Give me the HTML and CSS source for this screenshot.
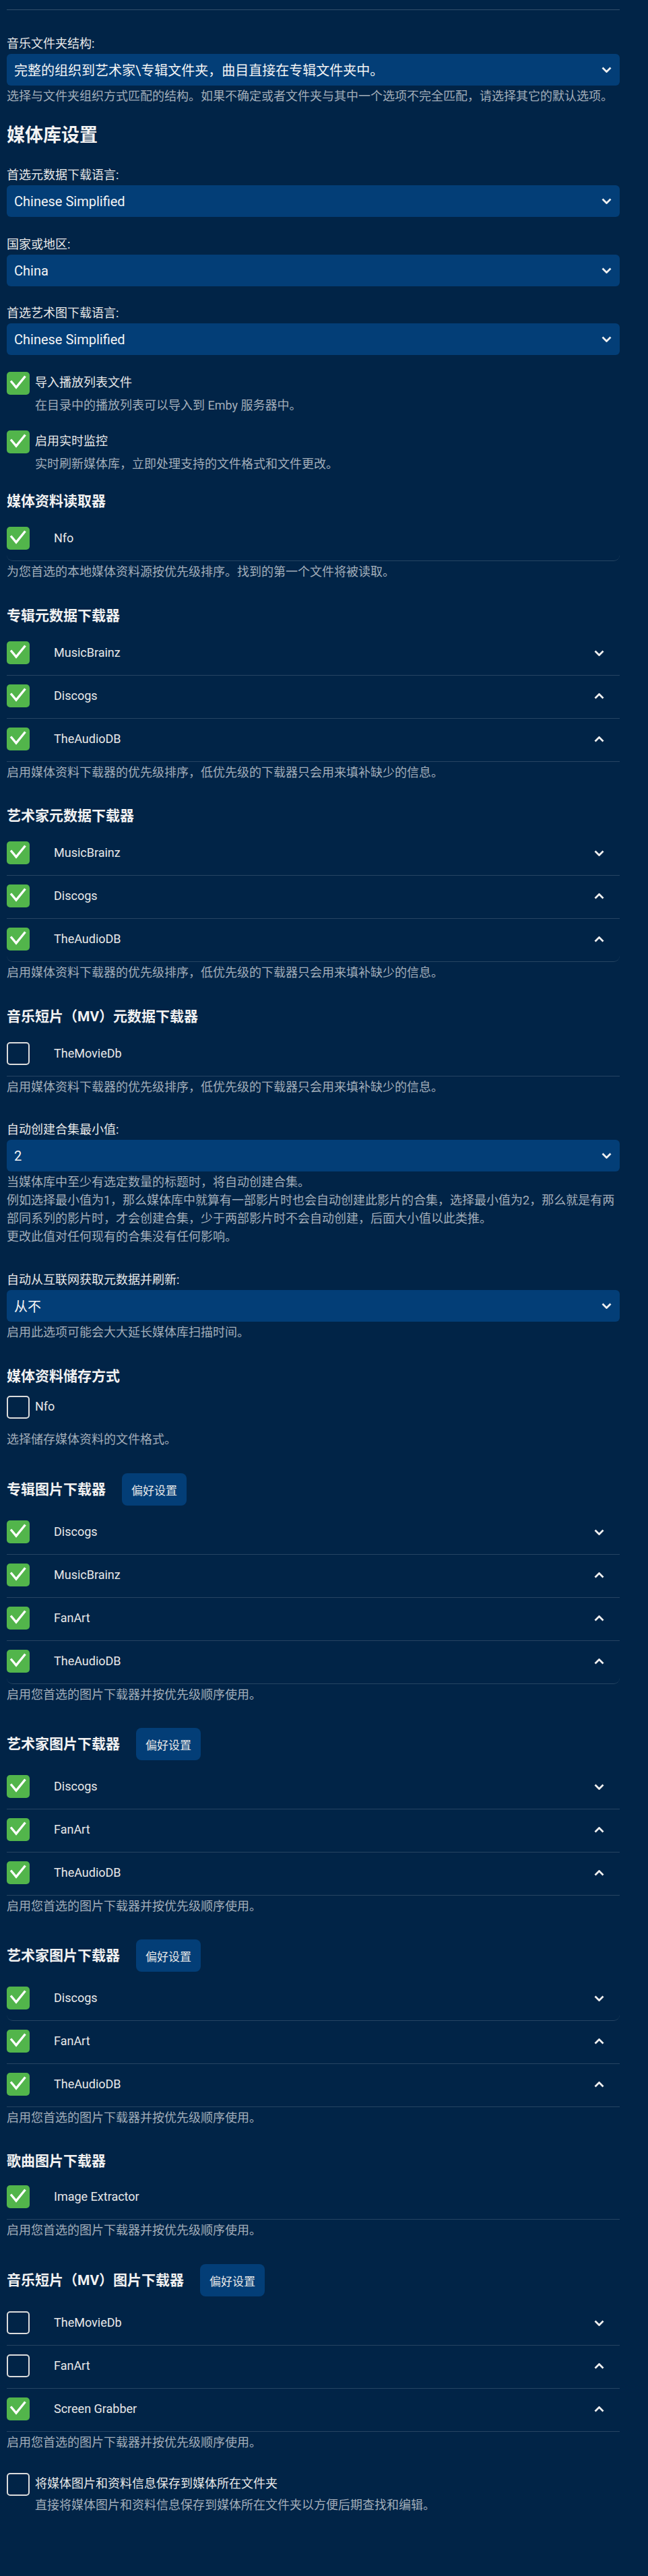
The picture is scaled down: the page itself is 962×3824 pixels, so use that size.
FILE: index.html
```html
<!DOCTYPE html>
<html lang="zh-CN">
<head>
<meta charset="utf-8">
<title>媒体库设置</title>
<link rel="stylesheet" href="styles.css">
</head>
<body>
<div class="page">
  <div class="rule"></div>

  <div class="field m38">
    <div class="field-label">音乐文件夹结构:</div>
    <div class="select"><span>完整的组织到艺术家\专辑文件夹，曲目直接在专辑文件夹中。</span><svg class="chev" viewBox="0 0 15 9"><path d="M1.5 1.5L7.5 7.5 13.5 1.5"/></svg></div>
  </div>
  <div class="help">选择与文件夹组织方式匹配的结构。如果不确定或者文件夹与其中一个选项不完全匹配，请选择其它的默认选项。</div>

  <h2 class="title m28">媒体库设置</h2>

  <div class="field m30">
    <div class="field-label">首选元数据下载语言:</div>
    <div class="select"><span>Chinese Simplified</span><svg class="chev" viewBox="0 0 15 9"><path d="M1.5 1.5L7.5 7.5 13.5 1.5"/></svg></div>
  </div>
  <div class="field m29">
    <div class="field-label">国家或地区:</div>
    <div class="select"><span>China</span><svg class="chev" viewBox="0 0 15 9"><path d="M1.5 1.5L7.5 7.5 13.5 1.5"/></svg></div>
  </div>
  <div class="field m28">
    <div class="field-label">首选艺术图下载语言:</div>
    <div class="select"><span>Chinese Simplified</span><svg class="chev" viewBox="0 0 15 9"><path d="M1.5 1.5L7.5 7.5 13.5 1.5"/></svg></div>
  </div>

  <div class="check-item m25">
    <div class="check-line"><span class="cb on"><svg class="tick" viewBox="0 0 34 34"><path d="M6 13.5L14 23 27.5 6.5"/></svg></span><span class="check-text">导入播放列表文件</span></div>
    <div class="check-sub">在目录中的播放列表可以导入到 Emby 服务器中。</div>
  </div>
  <div class="check-item m24">
    <div class="check-line"><span class="cb on"><svg class="tick" viewBox="0 0 34 34"><path d="M6 13.5L14 23 27.5 6.5"/></svg></span><span class="check-text">启用实时监控</span></div>
    <div class="check-sub">实时刷新媒体库，立即处理支持的文件格式和文件更改。</div>
  </div>

  <h3 class="subtitle m28">媒体资料读取器</h3>
  <div class="list m11">
    <div class="row rounded"><span class="cb on"><svg class="tick" viewBox="0 0 34 34"><path d="M6 13.5L14 23 27.5 6.5"/></svg></span><span class="name">Nfo</span></div>
  </div>
  <div class="help">为您首选的本地媒体资料源按优先级排序。找到的第一个文件将被读取。</div>

  <h3 class="subtitle m38">专辑元数据下载器</h3>
  <div class="list m11">
    <div class="row"><span class="cb on"><svg class="tick" viewBox="0 0 34 34"><path d="M6 13.5L14 23 27.5 6.5"/></svg></span><span class="name">MusicBrainz</span><svg class="chev row-chev" viewBox="0 0 15 9"><path d="M1.5 1.5L7.5 7.5 13.5 1.5"/></svg></div>
    <div class="row"><span class="cb on"><svg class="tick" viewBox="0 0 34 34"><path d="M6 13.5L14 23 27.5 6.5"/></svg></span><span class="name">Discogs</span><svg class="chev row-chev" viewBox="0 0 15 9"><path d="M1.5 7.5L7.5 1.5 13.5 7.5"/></svg></div>
    <div class="row"><span class="cb on"><svg class="tick" viewBox="0 0 34 34"><path d="M6 13.5L14 23 27.5 6.5"/></svg></span><span class="name">TheAudioDB</span><svg class="chev row-chev" viewBox="0 0 15 9"><path d="M1.5 7.5L7.5 1.5 13.5 7.5"/></svg></div>
  </div>
  <div class="help">启用媒体资料下载器的优先级排序，低优先级的下载器只会用来填补缺少的信息。</div>

  <h3 class="subtitle m37">艺术家元数据下载器</h3>
  <div class="list m11">
    <div class="row"><span class="cb on"><svg class="tick" viewBox="0 0 34 34"><path d="M6 13.5L14 23 27.5 6.5"/></svg></span><span class="name">MusicBrainz</span><svg class="chev row-chev" viewBox="0 0 15 9"><path d="M1.5 1.5L7.5 7.5 13.5 1.5"/></svg></div>
    <div class="row"><span class="cb on"><svg class="tick" viewBox="0 0 34 34"><path d="M6 13.5L14 23 27.5 6.5"/></svg></span><span class="name">Discogs</span><svg class="chev row-chev" viewBox="0 0 15 9"><path d="M1.5 7.5L7.5 1.5 13.5 7.5"/></svg></div>
    <div class="row rounded"><span class="cb on"><svg class="tick" viewBox="0 0 34 34"><path d="M6 13.5L14 23 27.5 6.5"/></svg></span><span class="name">TheAudioDB</span><svg class="chev row-chev" viewBox="0 0 15 9"><path d="M1.5 7.5L7.5 1.5 13.5 7.5"/></svg></div>
  </div>
  <div class="help">启用媒体资料下载器的优先级排序，低优先级的下载器只会用来填补缺少的信息。</div>

  <h3 class="subtitle m38">音乐短片（MV）元数据下载器</h3>
  <div class="list m11">
    <div class="row"><span class="cb off"></span><span class="name">TheMovieDb</span></div>
  </div>
  <div class="help">启用媒体资料下载器的优先级排序，低优先级的下载器只会用来填补缺少的信息。</div>

  <div class="field m38">
    <div class="field-label">自动创建合集最小值:</div>
    <div class="select"><span>2</span><svg class="chev" viewBox="0 0 15 9"><path d="M1.5 1.5L7.5 7.5 13.5 1.5"/></svg></div>
  </div>
  <div class="help">当媒体库中至少有选定数量的标题时，将自动创建合集。<br>例如选择最小值为1，那么媒体库中就算有一部影片时也会自动创建此影片的合集，选择最小值为2，那么就是有两部同系列的影片时，才会创建合集，少于两部影片时不会自动创建，后面大小值以此类推。<br>更改此值对任何现有的合集没有任何影响。</div>

  <div class="field m39">
    <div class="field-label">自动从互联网获取元数据并刷新:</div>
    <div class="select"><span>从不</span><svg class="chev" viewBox="0 0 15 9"><path d="M1.5 1.5L7.5 7.5 13.5 1.5"/></svg></div>
  </div>
  <div class="help">启用此选项可能会大大延长媒体库扫描时间。</div>

  <h3 class="subtitle m38">媒体资料储存方式</h3>
  <div class="check-item m15">
    <div class="check-line"><span class="cb off"></span><span class="check-text">Nfo</span></div>
  </div>
  <div class="help m17">选择储存媒体资料的文件格式。</div>

  <div class="head-row m37">
    <h3 class="subtitle">专辑图片下载器</h3>
    <span class="btn">偏好设置</span>
  </div>
  <div class="list m9">
    <div class="row"><span class="cb on"><svg class="tick" viewBox="0 0 34 34"><path d="M6 13.5L14 23 27.5 6.5"/></svg></span><span class="name">Discogs</span><svg class="chev row-chev" viewBox="0 0 15 9"><path d="M1.5 1.5L7.5 7.5 13.5 1.5"/></svg></div>
    <div class="row"><span class="cb on"><svg class="tick" viewBox="0 0 34 34"><path d="M6 13.5L14 23 27.5 6.5"/></svg></span><span class="name">MusicBrainz</span><svg class="chev row-chev" viewBox="0 0 15 9"><path d="M1.5 7.5L7.5 1.5 13.5 7.5"/></svg></div>
    <div class="row"><span class="cb on"><svg class="tick" viewBox="0 0 34 34"><path d="M6 13.5L14 23 27.5 6.5"/></svg></span><span class="name">FanArt</span><svg class="chev row-chev" viewBox="0 0 15 9"><path d="M1.5 7.5L7.5 1.5 13.5 7.5"/></svg></div>
    <div class="row rounded"><span class="cb on"><svg class="tick" viewBox="0 0 34 34"><path d="M6 13.5L14 23 27.5 6.5"/></svg></span><span class="name">TheAudioDB</span><svg class="chev row-chev" viewBox="0 0 15 9"><path d="M1.5 7.5L7.5 1.5 13.5 7.5"/></svg></div>
  </div>
  <div class="help">启用您首选的图片下载器并按优先级顺序使用。</div>

  <div class="head-row m36">
    <h3 class="subtitle">艺术家图片下载器</h3>
    <span class="btn">偏好设置</span>
  </div>
  <div class="list m9">
    <div class="row"><span class="cb on"><svg class="tick" viewBox="0 0 34 34"><path d="M6 13.5L14 23 27.5 6.5"/></svg></span><span class="name">Discogs</span><svg class="chev row-chev" viewBox="0 0 15 9"><path d="M1.5 1.5L7.5 7.5 13.5 1.5"/></svg></div>
    <div class="row"><span class="cb on"><svg class="tick" viewBox="0 0 34 34"><path d="M6 13.5L14 23 27.5 6.5"/></svg></span><span class="name">FanArt</span><svg class="chev row-chev" viewBox="0 0 15 9"><path d="M1.5 7.5L7.5 1.5 13.5 7.5"/></svg></div>
    <div class="row"><span class="cb on"><svg class="tick" viewBox="0 0 34 34"><path d="M6 13.5L14 23 27.5 6.5"/></svg></span><span class="name">TheAudioDB</span><svg class="chev row-chev" viewBox="0 0 15 9"><path d="M1.5 7.5L7.5 1.5 13.5 7.5"/></svg></div>
  </div>
  <div class="help">启用您首选的图片下载器并按优先级顺序使用。</div>

  <div class="head-row m36">
    <h3 class="subtitle">艺术家图片下载器</h3>
    <span class="btn">偏好设置</span>
  </div>
  <div class="list m9">
    <div class="row rounded"><span class="cb on"><svg class="tick" viewBox="0 0 34 34"><path d="M6 13.5L14 23 27.5 6.5"/></svg></span><span class="name">Discogs</span><svg class="chev row-chev" viewBox="0 0 15 9"><path d="M1.5 1.5L7.5 7.5 13.5 1.5"/></svg></div>
    <div class="row"><span class="cb on"><svg class="tick" viewBox="0 0 34 34"><path d="M6 13.5L14 23 27.5 6.5"/></svg></span><span class="name">FanArt</span><svg class="chev row-chev" viewBox="0 0 15 9"><path d="M1.5 7.5L7.5 1.5 13.5 7.5"/></svg></div>
    <div class="row"><span class="cb on"><svg class="tick" viewBox="0 0 34 34"><path d="M6 13.5L14 23 27.5 6.5"/></svg></span><span class="name">TheAudioDB</span><svg class="chev row-chev" viewBox="0 0 15 9"><path d="M1.5 7.5L7.5 1.5 13.5 7.5"/></svg></div>
  </div>
  <div class="help">启用您首选的图片下载器并按优先级顺序使用。</div>

  <h3 class="subtitle m37">歌曲图片下载器</h3>
  <div class="list m9">
    <div class="row"><span class="cb on"><svg class="tick" viewBox="0 0 34 34"><path d="M6 13.5L14 23 27.5 6.5"/></svg></span><span class="name">Image Extractor</span></div>
  </div>
  <div class="help">启用您首选的图片下载器并按优先级顺序使用。</div>

  <div class="head-row m37">
    <h3 class="subtitle">音乐短片（MV）图片下载器</h3>
    <span class="btn">偏好设置</span>
  </div>
  <div class="list m9">
    <div class="row"><span class="cb off"></span><span class="name">TheMovieDb</span><svg class="chev row-chev" viewBox="0 0 15 9"><path d="M1.5 1.5L7.5 7.5 13.5 1.5"/></svg></div>
    <div class="row"><span class="cb off"></span><span class="name">FanArt</span><svg class="chev row-chev" viewBox="0 0 15 9"><path d="M1.5 7.5L7.5 1.5 13.5 7.5"/></svg></div>
    <div class="row"><span class="cb on"><svg class="tick" viewBox="0 0 34 34"><path d="M6 13.5L14 23 27.5 6.5"/></svg></span><span class="name">Screen Grabber</span><svg class="chev row-chev" viewBox="0 0 15 9"><path d="M1.5 7.5L7.5 1.5 13.5 7.5"/></svg></div>
  </div>
  <div class="help">启用您首选的图片下载器并按优先级顺序使用。</div>

  <div class="check-item m32">
    <div class="check-line"><span class="cb off"></span><span class="check-text">将媒体图片和资料信息保存到媒体所在文件夹</span></div>
    <div class="check-sub tight">直接将媒体图片和资料信息保存到媒体所在文件夹以方便后期查找和编辑。</div>
  </div>
</div>
</body>
</html>
```

FILE: styles.css
```css
html, body {
  margin: 0;
  background: #012447;
}

body {
  font-family: Roboto, "Noto Sans CJK SC", sans-serif;
  color: #e6e6e6;
}

.page {
  display: flex;
  flex-direction: column;
  padding: 14px 42px 80px 10px;
}

.rule {
  border-top: 1px solid rgba(255, 255, 255, 0.2);
}

.field {
  display: flex;
  flex-direction: column;
}

.field-label {
  font-size: 18px;
  line-height: 23px;
  margin-bottom: 4px;
  color: #e8e8e8;
}

.select {
  height: 47px;
  box-sizing: border-box;
  background: #033e77;
  border-radius: 6px;
  display: flex;
  align-items: center;
  justify-content: space-between;
  padding: 0 12px 0 11px;
  font-size: 20px;
  color: #f4f4f4;
}

.chev {
  width: 15px;
  height: 9px;
  flex: none;
  fill: none;
  stroke: #f0f0f0;
  stroke-width: 2.8;
  stroke-linecap: butt;
  stroke-linejoin: miter;
}

.help {
  font-size: 18px;
  line-height: 27px;
  color: #a3aeba;
  margin-top: 2px;
}

.title {
  margin: 0;
  font-size: 27px;
  line-height: 34px;
  font-weight: 700;
  color: #f2f2f2;
}

.subtitle {
  margin: 0;
  font-size: 21px;
  line-height: 28px;
  font-weight: 700;
  color: #f2f2f2;
}

.head-row {
  display: flex;
  align-items: center;
  gap: 24px;
  height: 48px;
}

.btn {
  height: 48px;
  box-sizing: border-box;
  padding: 0 14px;
  background: #033e77;
  border-radius: 8px;
  font-size: 17px;
  display: flex;
  align-items: center;
  color: #e8e8e8;
}

.cb {
  width: 34px;
  height: 34px;
  box-sizing: border-box;
  border-radius: 5px;
  flex: none;
  display: flex;
}

.cb.on {
  background: #52b54b;
}

.cb.off {
  border: 2px solid #dcdcdc;
}

.tick {
  width: 34px;
  height: 34px;
  fill: none;
  stroke: #ffffff;
  stroke-width: 3.4;
}

.check-item {
  display: flex;
  flex-direction: column;
}

.check-line {
  display: flex;
  align-items: center;
  gap: 8px;
  font-size: 18px;
  line-height: 22px;
  color: #e8e8e8;
}

.check-text {
  margin-top: -2px;
}

.check-sub {
  padding-left: 42px;
  margin-top: 2px;
  font-size: 18px;
  line-height: 27px;
  color: #a3aeba;
}

.check-sub.tight {
  margin-top: 0;
}

.list {
  display: flex;
  flex-direction: column;
}

.row {
  display: flex;
  align-items: center;
  padding: 13px 0 16px;
  border-bottom: 1px solid rgba(255, 255, 255, 0.15);
}

.row.rounded {
  border-radius: 0 0 9px 9px;
}

.name {
  flex: 1;
  margin-left: 36px;
  font-size: 18px;
  line-height: 22px;
  color: #e8e8e8;
}

.row-chev {
  margin-right: 23px;
}

/* vertical rhythm helpers (kept last so they win over component margins) */
.m9 { margin-top: 9px; }
.m11 { margin-top: 11px; }
.m15 { margin-top: 15px; }
.m17 { margin-top: 17px; }
.m24 { margin-top: 24px; }
.m25 { margin-top: 25px; }
.m28 { margin-top: 28px; }
.m29 { margin-top: 29px; }
.m30 { margin-top: 30px; }
.m32 { margin-top: 32px; }
.m36 { margin-top: 36px; }
.m37 { margin-top: 37px; }
.m38 { margin-top: 38px; }
.m39 { margin-top: 39px; }
```
